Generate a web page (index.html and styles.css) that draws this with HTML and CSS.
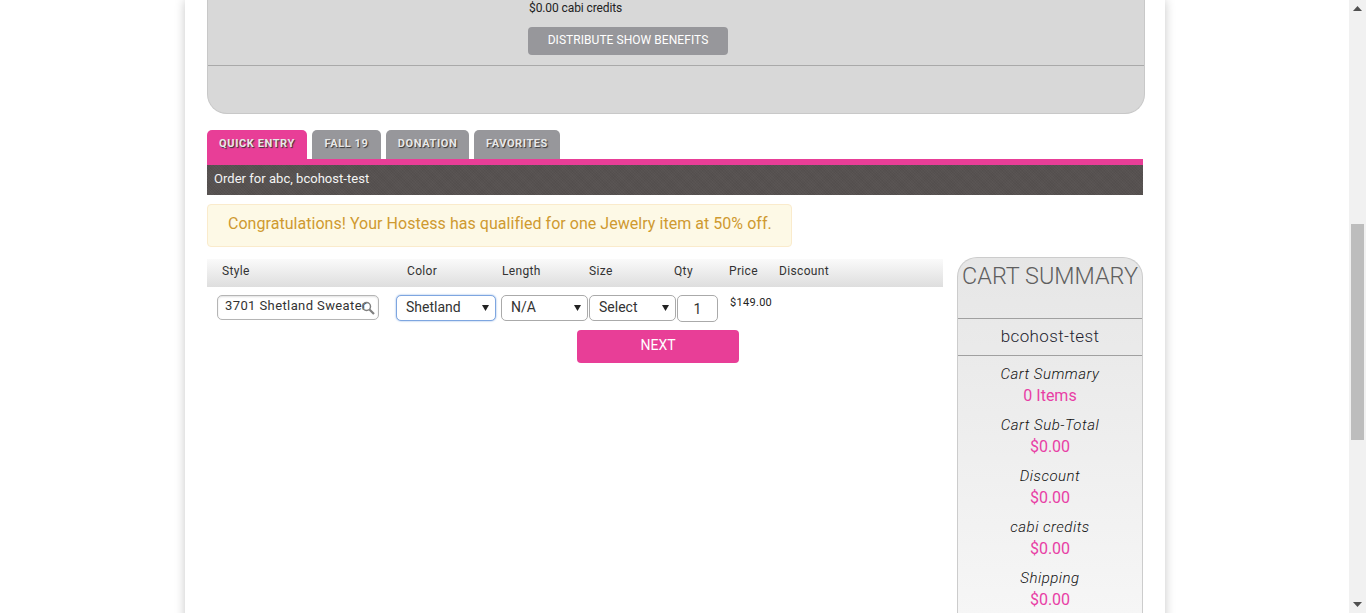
FILE: index.html
```html
<!DOCTYPE html>
<html>
<head>
<meta charset="utf-8">
<title>Quick Entry</title>
<link rel="stylesheet" href="styles.css">
</head>
<body>
<div class="screen">
	<div class="page">
		<div class="benefits">
			<div class="benefitsTop">
				<p class="credits">$0.00 cabi credits</p>
				<a class="distribute">DISTRIBUTE SHOW BENEFITS</a>
			</div>
		</div>
		<ul class="tabs">
			<li class="active t1">QUICK ENTRY</li>
			<li class="t2">FALL 19</li>
			<li class="t3">DONATION</li>
			<li class="t4">FAVORITES</li>
		</ul>
		<div class="orderFor">Order for abc, bcohost-test</div>
		<div class="alert">Congratulations! Your Hostess has qualified for one Jewelry item at 50% off.</div>
		<div class="main">
			<div class="entry">
				<div class="head">
					<span class="cStyle">Style</span>
					<span class="cColor">Color</span>
					<span class="cLength">Length</span>
					<span class="cSize">Size</span>
					<span class="cQty">Qty</span>
					<span class="cPrice">Price</span>
					<span>Discount</span>
				</div>
				<div class="row">
					<div class="search">
						<input class="styleInput" type="text" value="3701 Shetland Sweater">
						<svg class="lens" width="14" height="14" viewBox="0 0 14 14"><circle cx="5.5" cy="5.5" r="4" fill="none" stroke="#808080" stroke-width="1.5"/><path d="M8.5 8.5L13 13" stroke="#808080" stroke-width="2.2"/></svg>
					</div>
					<select class="sel selColor"><option>Shetland</option></select>
					<select class="sel selLength"><option>N/A</option></select>
					<select class="sel selSize"><option>Select</option></select>
					<input class="qty" type="text" value="1">
					<span class="price">$149.00</span>
				</div>
				<a class="next">NEXT</a>
			</div>
			<div class="cart">
				<h2>CART SUMMARY</h2>
				<div class="host">bcohost-test</div>
				<dl>
					<dt>Cart Summary</dt><dd>0 Items</dd>
					<dt>Cart Sub-Total</dt><dd>$0.00</dd>
					<dt>Discount</dt><dd>$0.00</dd>
					<dt>cabi credits</dt><dd>$0.00</dd>
					<dt>Shipping</dt><dd>$0.00</dd>
				</dl>
			</div>
		</div>
	</div>
	<div class="scrollbar">
		<svg class="arrow" width="9" height="5" viewBox="0 0 9 5"><path d="M4.5 0L9 5H0z" fill="#505050"/></svg>
		<div class="thumb"></div>
		<svg class="arrow" width="9" height="5" viewBox="0 0 9 5"><path d="M0 0H9L4.5 5z" fill="#505050"/></svg>
	</div>
</div>
</body>
</html>
```

FILE: styles.css
```css
* {
	padding:0;
	margin:0;
	box-sizing:border-box;
}
html,body {
	height:100%;
	overflow:hidden;
	background:white;
}
body {
	font-family:Roboto,"Liberation Sans",sans-serif;
	color:#222;
}
ul {
	list-style-type:none;
}
.screen {
	display:flex;
	height:613px;
	overflow:hidden;
}
.page {
	width:980px;
	height:800px;
	margin-left:185px;
	margin-right:184px;
	padding:0 22px;
	background:white;
	box-shadow:0 0 10px rgba(0,0,0,0.22);
}
.benefits {
	width:938px;
	height:114px;
	background:#d8d8d8;
	border:1px solid #c8c8c8;
	border-top:none;
	border-radius:0 0 20px 20px;
}
.benefitsTop {
	height:66px;
	border-bottom:1px solid #a9a9a9;
	padding-left:320px;
}
.credits {
	font-size:12px;
	line-height:16px;
	letter-spacing:-0.1px;
	padding-left:1px;
	color:#222;
}
.distribute {
	display:block;
	width:200px;
	height:28px;
	margin-top:11px;
	background:#97979b;
	border-radius:4px;
	color:white;
	font-size:12px;
	letter-spacing:0.05px;
	line-height:26px;
	text-align:center;
}
.tabs {
	display:flex;
	gap:5px;
	margin-top:16px;
	height:29px;
}
.tabs li {
	height:29px;
	background:#97979b;
	border-radius:5px 5px 0 0;
	color:#e8e8e8;
	font-size:11px;
	font-weight:bold;
	letter-spacing:0.6px;
	line-height:27px;
	text-align:center;
	text-shadow:1px 1px 1px #333;
}
.tabs li.active {
	background:#e83e97;
}
.t1 { width:100px; }
.t2 { width:69px; }
.t3 { width:83px; }
.t4 { width:86px; }
.orderFor {
	width:936px;
	height:36px;
	border-top:6px solid #e83e97;
	background-color:#565150;
	background-image:repeating-linear-gradient(45deg,rgba(255,255,255,0.025) 0,rgba(255,255,255,0.025) 1px,transparent 1px,transparent 2px),repeating-linear-gradient(-45deg,rgba(0,0,0,0.03) 0,rgba(0,0,0,0.03) 1px,transparent 1px,transparent 2px);
	color:#f4f4f4;
	font-size:13px;
	letter-spacing:0.03px;
	line-height:28px;
	padding-left:7px;
}
.alert {
	width:585px;
	height:43px;
	margin-top:9px;
	background:#fdf9e6;
	border:1px solid #faebcc;
	border-radius:4px;
	color:#cf9a30;
	font-size:16px;
	letter-spacing:0.04px;
	line-height:38px;
	padding-left:20px;
}
.main {
	display:flex;
	gap:14px;
	margin-top:10px;
	align-items:flex-start;
}
.entry {
	width:736px;
	padding-top:2px;
}
.head {
	display:flex;
	height:28px;
	background:linear-gradient(#fafafa,#dedede);
	font-size:12px;
	letter-spacing:0.35px;
	line-height:24px;
	padding-left:15px;
	color:#333;
}
.cStyle { width:185px; }
.cColor { width:95px; }
.cLength { width:87px; }
.cSize { width:85px; }
.cQty { width:55px; }
.cPrice { width:50px; }
.row {
	display:flex;
	align-items:flex-start;
	height:43px;
	padding:7px 0 0 10px;
}
.search {
	position:relative;
	width:162px;
	margin-right:17px;
	margin-top:1px;
}
.styleInput {
	display:block;
	width:162px;
	height:25px;
	border:1px solid #b5b5b5;
	border-radius:5px;
	box-shadow:inset 0 1px 2px rgba(0,0,0,0.12);
	font-family:inherit;
	font-size:13px;
	letter-spacing:0.4px;
	color:#333;
	padding:0 2px 4px 7px;
	background:white;
}
.lens {
	position:absolute;
	right:4px;
	top:6px;
}
.sel {
	appearance:none;
	height:26px;
	margin-top:1px;
	border:1px solid #aaa;
	border-radius:5px;
	background:white url("data:image/svg+xml,%3Csvg xmlns='http://www.w3.org/2000/svg' width='7' height='6'%3E%3Cpath d='M0 0H7L3.5 6z' fill='%23222'/%3E%3C/svg%3E") no-repeat right 6px center;
	font-family:inherit;
	font-size:14px;
	line-height:22px;
	color:#333;
	padding:0 0 2px 9px;
}
.selColor {
	width:100px;
	margin-right:5px;
	border-color:#7ea6e0;
	box-shadow:0 0 2px #7ea6e0;
}
.selLength {
	width:87px;
	margin-right:1px;
}
.selSize {
	width:87px;
	margin-right:1px;
}
.qty {
	width:41px;
	height:27px;
	margin-top:1px;
	border:1px solid #aaa;
	border-radius:5px;
	font-family:inherit;
	font-size:14px;
	text-align:center;
	color:#333;
}
.price {
	font-size:11px;
	letter-spacing:0.3px;
	line-height:14px;
	margin-left:12px;
	margin-top:2px;
	color:#222;
}
.next {
	display:block;
	width:162px;
	height:33px;
	margin-left:370px;
	background:#e83e97;
	border-radius:4px;
	color:white;
	font-size:14px;
	line-height:31px;
	text-align:center;
}
.cart {
	width:186px;
	height:500px;
	border:1px solid #ccc;
	border-bottom:none;
	border-radius:20px 20px 0 0;
	background:linear-gradient(#e6e6e6,#f6f6f6 356px,#f8f8f8);
	text-align:center;
}
.cart h2 {
	height:61px;
	border-bottom:1px solid #a0a0a0;
	font-size:23.4px;
	font-weight:300;
	line-height:36px;
	color:#5f5f5f;
	white-space:nowrap;
}
.host {
	height:37px;
	border-bottom:1px solid #a0a0a0;
	font-size:17px;
	font-weight:300;
	letter-spacing:0.4px;
	line-height:34px;
	color:#1f1f30;
}
.cart dl {
	padding-top:8px;
}
.cart dt {
	font-size:15px;
	font-style:italic;
	font-weight:300;
	letter-spacing:0.5px;
	line-height:21px;
	color:#111;
}
.cart dd {
	font-size:16px;
	line-height:22px;
	height:30px;
	color:#e83ea5;
}
.scrollbar {
	flex:none;
	width:17px;
	height:613px;
	background:#f1f1f1;
	position:relative;
}
.arrow {
	position:absolute;
	left:4px;
}
.arrow:first-child {
	top:6px;
}
.arrow:last-child {
	bottom:6px;
}
.thumb {
	position:absolute;
	left:2px;
	top:224px;
	width:13px;
	height:216px;
	background:#bdbdbd;
}
```
